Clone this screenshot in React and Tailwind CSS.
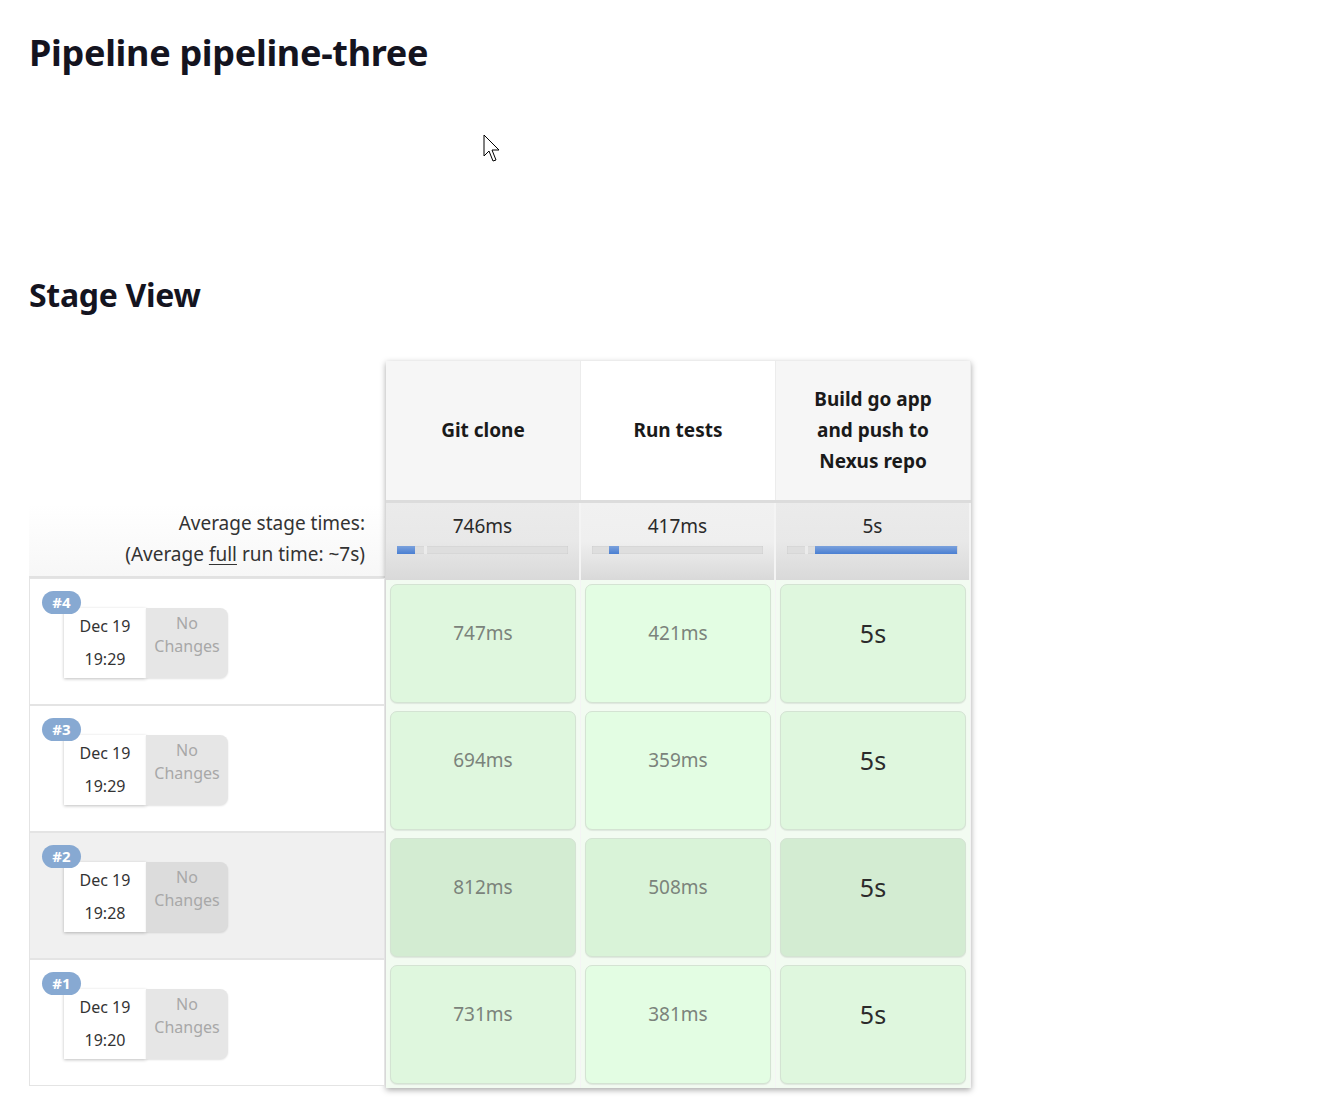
import React from 'react';

const stages = ['Git clone', 'Run tests', 'Build go app and push to Nexus repo'];

const averages = [
  { label: '746ms', start: 0, width: 18, marker: 27 },
  { label: '417ms', start: 17, width: 10, marker: null },
  { label: '5s', start: 28, width: 142, marker: 18 },
];

const builds = [
  { id: 4, date: 'Dec 19', time: '19:29', times: ['747ms', '421ms', '5s'] },
  { id: 3, date: 'Dec 19', time: '19:29', times: ['694ms', '359ms', '5s'] },
  { id: 2, date: 'Dec 19', time: '19:28', times: ['812ms', '508ms', '5s'], active: true },
  { id: 1, date: 'Dec 19', time: '19:20', times: ['731ms', '381ms', '5s'] },
];

const cellBg = (col, active) => {
  if (active) return col === 1 ? 'bg-[#d9f3d8]' : 'bg-[#d3ecd2]';
  return col === 1 ? 'bg-[#e3fde3]' : 'bg-[#dff7de]';
};

const Cursor = () => (
  <svg className="absolute left-[483px] top-[134px]" width="20" height="30" viewBox="0 0 20 30">
    <path d="M1 1 L1 22 L6 17 L10 27 L13 26 L9 16 L16 16 Z" fill="#fff" stroke="#000" strokeWidth="1" strokeLinejoin="round" />
  </svg>
);

const BuildCell = ({ build }) => (
  <div className={`relative h-[127px] border border-[#e4e4e4] ${build.active ? 'bg-[#f0f0f0]' : 'bg-white'}`}>
    <div className="absolute left-[12px] top-[12px] z-10 flex h-[23px] w-[39px] items-center justify-center rounded-full bg-[#87a9d2] text-[15px] font-bold text-white">
      #{build.id}
    </div>
    <div className="absolute left-[34px] top-[29px] flex">
      <div className="flex h-[70px] w-[82px] flex-col items-center justify-center bg-white text-[16px] leading-[33px] text-[#333] shadow-[0_1px_3px_rgba(0,0,0,0.25)]">
        <div>{build.date}</div>
        <div>{build.time}</div>
      </div>
      <div className={`flex h-[70px] w-[82px] flex-col items-center pt-[4px] rounded-r-[8px] text-[16px] leading-[23px] text-[#a8a8a8] shadow-[0_1px_2px_rgba(0,0,0,0.12)] ${build.active ? 'bg-[#dcdcdc]' : 'bg-[#e6e6e6]'}`}>
        <div>No</div>
        <div>Changes</div>
      </div>
    </div>
  </div>
);

export default function App() {
  return (
    <div className="relative min-h-screen bg-white pl-[29px] pt-[28px] text-[#14141f]" style={{ fontFamily: '"Noto Sans", "Open Sans", sans-serif' }}>
      <Cursor />
      <h1 className="text-[36px] font-bold leading-[50px] tracking-[-0.3px]">Pipeline pipeline-three</h1>

      <h2 className="mt-[196px] text-[32px] font-bold leading-[42px] tracking-[-0.3px]">Stage View</h2>

      <div className="mt-[45px] flex">
        {/* left column */}
        <div className="w-[356px] shrink-0">
          <div className="h-[143px]" />
          <div className="flex h-[74px] flex-col items-end justify-center border-b-2 border-[#e2e2e2] bg-gradient-to-b from-white to-[#f7f7f7] pr-[20px] pb-[2px] text-[19px] leading-[31px] text-[#333]">
            <div>Average stage times:</div>
            <div>
              (Average <span className="underline underline-offset-[3px]">full</span> run time: ~7s)
            </div>
          </div>
          {builds.map(b => (
            <BuildCell key={b.id} build={b} />
          ))}
        </div>

        {/* stage table */}
        <div className="ml-[1px] shrink-0 bg-white shadow-[0_2px_6px_rgba(0,0,0,0.35)]">
          <div className="flex">
            {stages.map((s, i) => (
              <div
                key={s}
                className={`flex h-[139px] w-[195px] items-center justify-center border-r border-[#ececec] px-[30px] text-center text-[19px] font-bold leading-[31px] text-[#1a1a1a] ${i === 1 ? 'bg-white' : 'bg-[#f6f6f6]'}`}
              >
                {s}
              </div>
            ))}
          </div>
          <div className="flex border-t-[3px] border-[#dcdcdc]">
            {averages.map((a, i) => (
              <div
                key={i}
                className={`flex h-[77px] w-[195px] flex-col items-center border-r-2 border-[#f4f4f4] bg-gradient-to-b from-[#ebebeb] via-[#e8e8e8] to-[#d9d9d9] pt-[10px] ${i === 1 ? 'from-[#f1f1f1] via-[#efefef]' : ''}`}
              >
                <div className="text-[19px] leading-[26px] text-[#2a2a2a]">{a.label}</div>
                <div className="relative mt-[7px] h-[8px] w-[171px] bg-[#dedede] shadow-[inset_0_0_1px_rgba(0,0,0,0.3)]">
                  {a.marker !== null && (
                    <div className="absolute top-0 h-[8px] w-[3px] bg-[#ebebeb]" style={{ left: a.marker }} />
                  )}
                  <div className="absolute top-0 h-[8px] bg-gradient-to-b from-[#7ba1dc] to-[#4a7fd2]" style={{ left: a.start, width: a.width }} />
                </div>
              </div>
            ))}
          </div>
          {builds.map(b => (
            <div key={b.id} className="flex bg-[#f2fbf1]">
              {b.times.map((t, i) => (
                <div key={i} className="h-[127px] w-[195px] border-r border-[#f4f4f4] p-[4px]">
                  <div
                    className={`flex h-full items-center justify-center rounded-[7px] border border-[#d4e3d3] pb-[20px] shadow-[0_1px_1px_rgba(0,0,0,0.08)] ${cellBg(i, b.active)}`}
                  >
                    {i === 2 ? (
                      <span className="text-[25px] text-[#2b2b2b]">{t}</span>
                    ) : (
                      <span className="text-[19px] text-[#7b837b]">{t}</span>
                    )}
                  </div>
                </div>
              ))}
            </div>
          ))}
        </div>
      </div>
    </div>
  );
}
